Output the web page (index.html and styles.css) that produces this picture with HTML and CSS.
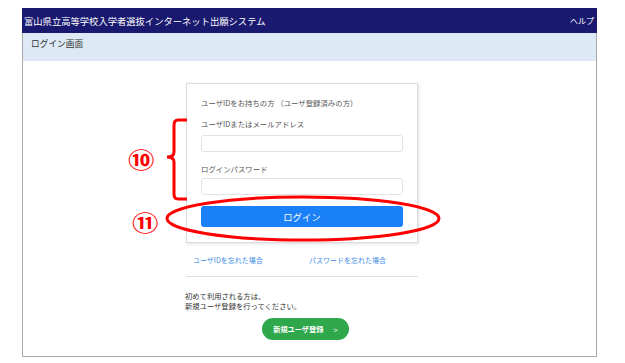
FILE: index.html
```html
<!DOCTYPE html>
<html lang="ja">
<head>
    <meta charset="UTF-8">
    <meta name="viewport" content="width=device-width, initial-scale=1.0">
    <title>富山県立高等学校入学者選抜インターネット出願システム - ログイン</title>
    <link rel="stylesheet" href="styles.css">
</head>
<body>
    <div class="page">
        <div class="site-header">
            <span class="site-title">富山県立高等学校入学者選抜インターネット出願システム</span>
            <a class="help-link" href="#">ヘルプ</a>
        </div>
        <div class="frame">
            <div class="page-title">ログイン画面</div>
            <div class="login-column">
                <form class="login-card">
                    <p class="card-heading">ユーザIDをお持ちの方 （ユーザ登録済みの方）</p>
                    <label class="field-label" for="userId">ユーザIDまたはメールアドレス</label>
                    <input class="field-input" type="text" id="userId">
                    <label class="field-label second" for="password">ログインパスワード</label>
                    <input class="field-input" type="password" id="password">
                    <button class="login-button" type="submit">ログイン</button>
                </form>
                <div class="forgot-links">
                    <a href="#">ユーザIDを忘れた場合</a>
                    <a href="#">パスワードを忘れた場合</a>
                </div>
                <div class="divider"></div>
                <p class="first-time">初めて利用される方は、<br>新規ユーザ登録を行ってください。</p>
                <a class="register-button" href="#">新規ユーザ登録<span class="chevron">&gt;</span></a>
            </div>
        </div>

        <!-- red annotation marks drawn over the screen -->
        <svg class="marks" width="625" height="363" viewBox="0 0 625 363">
            <path d="M187,120 H178 Q174,120 174,125 V152 Q174,157 167,157 Q174,157 174,162 V194 Q174,199 178,199 H187" fill="none" stroke="#ff0000" stroke-width="3"/>
            <ellipse cx="303" cy="218.5" rx="136" ry="21.5" fill="none" stroke="#ff0000" stroke-width="3"/>
        </svg>
        <span class="mark-number num-10">⑩</span>
        <span class="mark-number num-11">⑪</span>
    </div>
</body>
</html>
```

FILE: styles.css
```css
body {
    margin: 0;
    background: #ffffff;
    font-family: "Noto Sans CJK JP", "Noto Sans", sans-serif;
    color: #444;
}

.page {
    position: relative;
    width: 625px;
    height: 363px;
    padding-top: 8px;
    box-sizing: border-box;
}

/* Top navy bar */
.site-header {
    margin-left: 22px;
    width: 575px;
    height: 25px;
    background: #191970;
    display: flex;
    align-items: center;
    justify-content: space-between;
    padding: 0 3px 0 2px;
    box-sizing: border-box;
    color: #fff;
}

.site-title {
    font-size: 9.3px;
}

.help-link {
    color: #fff;
    text-decoration: none;
    font-size: 8px;
}

/* Main frame */
.frame {
    margin-left: 22px;
    width: 575px;
    border: 1px solid #a8a8a8;
    border-top: none;
    box-sizing: border-box;
    padding-bottom: 16px;
}

.page-title {
    height: 28px;
    background: #dde9f5;
    font-size: 8.7px;
    padding: 4px 0 0 8px;
    box-sizing: border-box;
    color: #333;
}

.login-column {
    width: 232px;
    margin-left: 163px;
}

/* Login card */
.login-card {
    margin: 22px 0 0;
    border: 1px solid #dcdcdc;
    box-shadow: 1px 1px 3px rgba(0, 0, 0, 0.12);
    padding: 13px 14px 15px;
    display: flex;
    flex-direction: column;
    font-size: 7.4px;
    line-height: 11px;
}

.card-heading {
    margin: 0;
    color: #555;
}

.field-label {
    margin-top: 10px;
    color: #555;
}
.field-label.second {
    margin-top: 11px;
}

.field-input {
    margin-top: 6px;
    height: 17px;
    border: 1px solid #e2e2e2;
    border-radius: 3px;
    box-sizing: border-box;
    padding: 0 4px;
}
.field-label.second + .field-input {
    margin-top: 4px;
}

.login-button {
    margin-top: 11px;
    height: 21px;
    border: none;
    border-radius: 3px;
    background: #1a80f8;
    color: #fff;
    font-family: inherit;
    font-size: 9.4px;
    padding: 0;
}

/* Links under the card */
.forgot-links {
    display: flex;
    margin-top: 12px;
    font-size: 7px;
    line-height: 11px;
}
.forgot-links a {
    flex: 1;
    padding-left: 7px;
    color: #3d8ce6;
    text-decoration: none;
}

.divider {
    margin-top: 10px;
    height: 1px;
    background: #e0e0e0;
}

.first-time {
    margin: 14px 0 0 -1px;
    font-size: 7.3px;
    line-height: 10px;
    color: #333;
}

.register-button {
    display: flex;
    align-items: center;
    justify-content: center;
    margin: 7px 0 0 76px;
    width: 87px;
    height: 22px;
    border-radius: 11px;
    background: #2ea84a;
    color: #fff;
    text-decoration: none;
    font-size: 7.2px;
    font-weight: bold;
}
.register-button .chevron {
    margin-left: 10px;
    font-weight: normal;
    font-size: 8px;
}

/* Annotation overlay */
.marks {
    position: absolute;
    left: 0;
    top: 0;
    pointer-events: none;
}

.mark-number {
    position: absolute;
    color: #ff0000;
    font-size: 22px;
    line-height: 22px;
    font-weight: bold;
    transform: scaleX(1.2);
    transform-origin: left top;
}
.num-10 {
    left: 128px;
    top: 147px;
}
.num-11 {
    left: 132px;
    top: 210px;
}
```
